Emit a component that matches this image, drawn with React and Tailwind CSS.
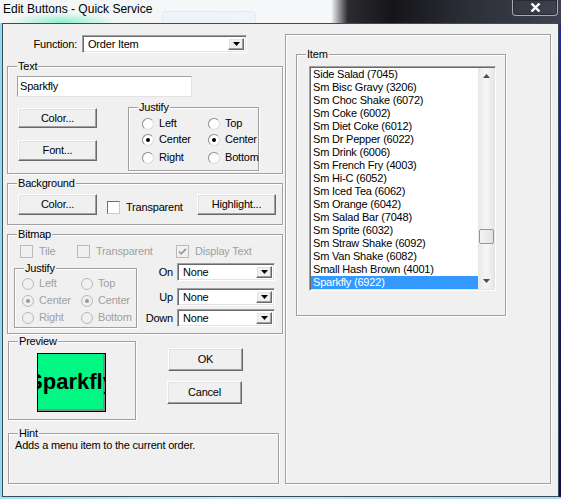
import React from 'react';

const items = [
  'Side Salad (7045)',
  'Sm Bisc Gravy (3206)',
  'Sm Choc Shake (6072)',
  'Sm Coke (6002)',
  'Sm Diet Coke (6012)',
  'Sm Dr Pepper (6022)',
  'Sm Drink (6006)',
  'Sm French Fry (4003)',
  'Sm Hi-C (6052)',
  'Sm Iced Tea (6062)',
  'Sm Orange (6042)',
  'Sm Salad Bar (7048)',
  'Sm Sprite (6032)',
  'Sm Straw Shake (6092)',
  'Sm Van Shake (6082)',
  'Small Hash Brown (4001)',
  'Sparkfly (6922)',
];

function Group({ label, className = '', children }) {
  return (
    <div className={`relative border border-[#a0a0a0] shadow-[inset_1px_1px_0_#fff,1px_1px_0_#fff] ${className}`}>
      {label && (
        <span className="absolute left-[9px] -top-[7px] bg-[#f0f0f0] px-[1px] leading-[13px]">{label}</span>
      )}
      {children}
    </div>
  );
}

function Button({ children, className = '' }) {
  return (
    <div className={`flex items-center justify-center bg-[#f0f0f0] border border-t-white border-l-white border-r-[#696969] border-b-[#696969] shadow-[inset_-1px_-1px_0_#a0a0a0,inset_1px_1px_0_#e3e3e3] ${className}`}>
      {children}
    </div>
  );
}

function Arrow() {
  return (
    <svg width="7" height="4" viewBox="0 0 7 4">
      <path d="M0 0h7L3.5 4z" fill="#000" />
    </svg>
  );
}

function Combo({ value, className = '' }) {
  return (
    <div className={`flex bg-white border border-t-[#a0a0a0] border-l-[#a0a0a0] border-r-white border-b-white shadow-[inset_1px_1px_0_#696969,inset_-1px_-1px_0_#e3e3e3] ${className}`}>
      <span className="flex-1 pl-[5px] flex items-center">{value}</span>
      <Button className="w-[16px] my-[2px] mr-[2px]">
        <Arrow />
      </Button>
    </div>
  );
}

function Radio({ checked, disabled, label }) {
  return (
    <div className="flex items-center h-[13px]">
      <span
        className={`w-[12px] h-[12px] rounded-full border flex items-center justify-center ${
          disabled
            ? 'border-[#b9b9b9] bg-[#f0f0f0]'
            : 'border-t-[#8d8d8d] border-l-[#8d8d8d] border-r-[#dcdcdc] border-b-[#dcdcdc] bg-white'
        }`}
      >
        {checked && (
          <span className={`w-[4px] h-[4px] rounded-full ${disabled ? 'bg-[#9a9a9a]' : 'bg-black'}`} />
        )}
      </span>
      <span className={`ml-[5px] ${disabled ? 'text-[#a0a0a0]' : ''}`}>{label}</span>
    </div>
  );
}

function Check({ checked, disabled, label, className = '' }) {
  return (
    <div className={`flex items-center h-[13px] ${className}`}>
      <span
        className={`w-[13px] h-[13px] border flex items-center justify-center ${
          disabled
            ? 'border-[#b9b9b9] bg-[#f0f0f0]'
            : 'border-t-[#6e6e6e] border-l-[#6e6e6e] border-r-[#c8c8c8] border-b-[#c8c8c8] bg-white'
        }`}
      >
        {checked && (
          <svg width="9" height="9" viewBox="0 0 9 9">
            <path d="M1 4.5l2.2 2.3L8 1.8" stroke={disabled ? '#9a9a9a' : '#000'} strokeWidth="1.8" fill="none" />
          </svg>
        )}
      </span>
      <span className={`ml-[6px] ${disabled ? 'text-[#a0a0a0]' : ''}`}>{label}</span>
    </div>
  );
}

export default function App() {
  return (
    <div className="w-[561px] h-[499px] overflow-hidden flex flex-col bg-[#8fdbe9] font-['Liberation_Sans',Arial,sans-serif] text-[11px] leading-[13px] tracking-[-0.2px] text-black">
      {/* Title bar */}
      <div className="relative h-[23px] shrink-0 overflow-hidden tracking-normal bg-[radial-gradient(ellipse_55px_9px_at_62px_22px,#8df0cd,transparent),linear-gradient(90deg,#f3f6f6_0%,#f5f7f8_59%,#2b2b30_62%,#151519_70%,#2a2c35_82%,#3f4250_100%)]">
        <div className="absolute left-[162px] top-[11px] w-[94px] h-[16px] rounded-[3px] border border-[#dbe7f3] bg-[#edf3fa] opacity-70" />
        <div className="relative pl-[3px] pt-[1px] text-[12px] leading-[16px] text-black">Edit Buttons - Quick Service</div>
        <div className="absolute right-[3px] top-0 w-[46px] h-[16px] border border-t-0 border-[#a9abb3] rounded-b-[4px] shadow-[inset_0_0_0_1px_#2a2c35] flex items-center justify-center">
          <svg width="11" height="9" viewBox="0 0 11 9">
            <path d="M1.5 0.5l8 8M9.5 0.5l-8 8" stroke="#fff" strokeWidth="2.4" />
          </svg>
        </div>
      </div>

      <div className="flex h-[474px] shrink-0">
        <div className="w-[2px] bg-[#8fdbe9]" />
        {/* Client area */}
        <div className="w-[557px] h-[474px] border border-[#3d4b5c] bg-[#f0f0f0] flex">
          {/* Left column */}
          <div className="ml-[4px] w-[276px] flex flex-col">
            <div className="mt-[11px] flex h-[18px]">
              <span className="w-[75px] pr-[5px] flex items-center justify-end">Function:</span>
              <Combo value="Order Item" className="w-[165px]" />
            </div>

            <Group label="Text" className="mt-[13px] h-[108px] pl-[9px] pt-[9px]">
              <div className="w-[175px] h-[21px] bg-white border border-t-[#a0a0a0] border-l-[#a0a0a0] border-r-[#e3e3e3] border-b-[#e3e3e3] pl-[2px] flex items-center">
                Sparkfly
              </div>
              <div className="mt-[10px] flex items-start">
                <div className="ml-[1px] mt-[1px] flex flex-col">
                  <Button className="w-[79px] h-[20px]">Color...</Button>
                  <Button className="mt-[12px] w-[79px] h-[21px]">Font...</Button>
                </div>
                <Group label="Justify" className="ml-[31px] w-[131px] h-[64px] pl-[13px] pt-[9px]">
                  <div className="grid grid-cols-[66px_60px]">
                    <Radio label="Left" />
                    <Radio label="Top" />
                  </div>
                  <div className="mt-[3px] grid grid-cols-[66px_60px]">
                    <Radio label="Center" checked />
                    <Radio label="Center" checked />
                  </div>
                  <div className="mt-[5px] grid grid-cols-[66px_60px]">
                    <Radio label="Right" />
                    <Radio label="Bottom" />
                  </div>
                </Group>
              </div>
            </Group>

            <Group label="Background" className="mt-[9px] h-[42px] pl-[10px] pt-[10px] flex items-start">
              <Button className="w-[79px] h-[21px]">Color...</Button>
              <Check label="Transparent" className="ml-[10px] mt-[7px] w-[90px]" />
              <Button className="w-[79px] h-[21px]">Highlight...</Button>
            </Group>

            <Group label="Bitmap" className="mt-[9px] h-[100px] pt-[10px]">
              <div className="flex pl-[12px]">
                <Check label="Tile" disabled className="w-[57px]" />
                <Check label="Transparent" disabled className="w-[99px]" />
                <Check label="Display Text" disabled checked />
              </div>
              <div className="mt-[5px] flex items-start">
                <Group label="Justify" className="ml-[6px] mt-[5px] w-[123px] h-[60px] pl-[7px] pt-[8px]">
                  <div className="grid grid-cols-[59px_56px]">
                    <Radio label="Left" disabled />
                    <Radio label="Top" disabled />
                  </div>
                  <div className="mt-[4px] grid grid-cols-[59px_56px]">
                    <Radio label="Center" disabled checked />
                    <Radio label="Center" disabled checked />
                  </div>
                  <div className="mt-[4px] grid grid-cols-[59px_56px]">
                    <Radio label="Right" disabled />
                    <Radio label="Bottom" disabled />
                  </div>
                </Group>
                <div className="flex flex-col">
                  <div className="flex h-[18px]">
                    <span className="w-[36px] flex items-center justify-end">On</span>
                    <Combo value="None" className="ml-[4px] w-[98px]" />
                  </div>
                  <div className="mt-[7px] flex h-[18px]">
                    <span className="w-[36px] flex items-center justify-end">Up</span>
                    <Combo value="None" className="ml-[4px] w-[98px]" />
                  </div>
                  <div className="mt-[3px] flex h-[18px]">
                    <span className="w-[36px] flex items-center justify-end">Down</span>
                    <Combo value="None" className="ml-[4px] w-[98px]" />
                  </div>
                </div>
              </div>
            </Group>

            <div className="mt-[7px] flex items-start">
              <Group label="Preview" className="ml-[1px] w-[128px] h-[79px] pl-[28px] pt-[11px]">
                <div className="w-[69px] h-[59px] border border-black bg-[#00f783] shadow-[inset_-2px_-2px_0_#8a8a8a] overflow-hidden flex items-center justify-center">
                  <span className="font-bold text-[22px] leading-[24px] tracking-normal whitespace-nowrap pb-[1px]">
                    Sparkfly
                  </span>
                </div>
              </Group>
              <div className="mt-[7px] flex flex-col">
                <Button className="ml-[32px] w-[75px] h-[23px]">OK</Button>
                <Button className="ml-[31px] mt-[10px] w-[75px] h-[23px]">Cancel</Button>
              </div>
            </div>

            <Group label="Hint" className="mt-[13px] ml-[1px] w-[271px] h-[51px] pl-[6px] pt-[5px]">
              Adds a menu item to the current order.
            </Group>
          </div>

          {/* Right panel */}
          <Group className="ml-[2px] mt-[10px] w-[266px] h-[450px] pl-[10px] pt-[19px]">
            <Group label="Item" className="w-[210px] h-[262px] pl-[12px] pt-[11px]">
              <div className="w-[187px] h-[225px] bg-white border border-t-[#a0a0a0] border-l-[#a0a0a0] border-r-white border-b-white shadow-[inset_1px_1px_0_#696969,inset_-1px_-1px_0_#e3e3e3] p-[1px] flex overflow-hidden">
                <div className="w-[167px] flex flex-col overflow-hidden">
                  {items.map((it, i) => (
                    <div
                      key={i}
                      className={`h-[13px] shrink-0 pl-[2px] whitespace-nowrap leading-[13px] ${
                        i === items.length - 1 ? 'bg-[#3399ff] text-white' : ''
                      }`}
                    >
                      {it}
                    </div>
                  ))}
                </div>
                <div className="w-[16px] bg-[linear-gradient(90deg,#e6e6e6,#f4f4f4_40%,#f4f4f4_60%,#e6e6e6)] flex flex-col items-center">
                  <div className="h-[16px] flex items-center justify-center">
                    <svg width="7" height="4" viewBox="0 0 7 4">
                      <path d="M3.5 0L7 4H0z" fill="#4d4d4d" />
                    </svg>
                  </div>
                  <div className="mt-[145px] w-[15px] h-[15px] rounded-[2px] border border-[#979797] bg-[linear-gradient(90deg,#f4f4f4,#e2e2e2)]" />
                  <div className="mt-auto h-[16px] flex items-center justify-center">
                    <svg width="7" height="4" viewBox="0 0 7 4">
                      <path d="M0 0h7L3.5 4z" fill="#4d4d4d" />
                    </svg>
                  </div>
                </div>
              </div>
            </Group>
          </Group>
        </div>
        <div className="w-[2px] bg-[linear-gradient(180deg,#27279a,#0e0e40)]" />
      </div>
      <div className="flex-1 bg-[linear-gradient(90deg,#9ee6f2,#bfeef7_40%,#a6dcef)]" />
    </div>
  );
}
